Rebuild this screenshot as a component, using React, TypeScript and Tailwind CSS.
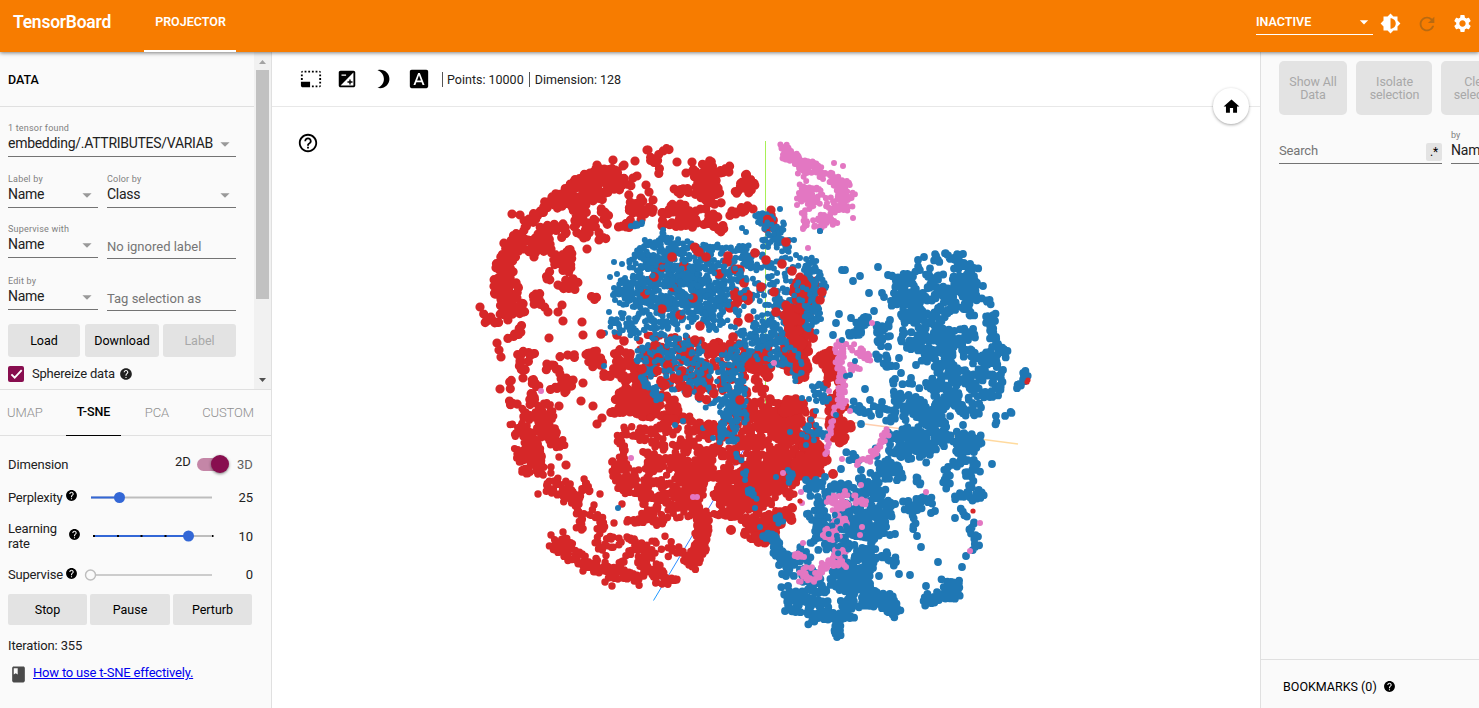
import React from "react";
import {
  MdPhotoSizeSelectSmall,
  MdExposure,
  MdBrightness3,
  MdFontDownload,
  MdHelpOutline,
  MdHelp,
  MdHome,
  MdBrightness6,
  MdRefresh,
  MdSettings,
  MdArrowDropDown,
  MdBook,
} from "react-icons/md";

type Layer = { color: string; r: number; gain: number; strokes: number[][]; dots?: number[] };

const RED = "#d62728";
const BLUE = "#1f77b4";
const PINK = "#e377c2";

// Each stroke is [x1, y1, x2, y2, halfWidth, density]; points are scattered along it.
const layers: Layer[] = [
  {
    color: RED,
    r: 4.6,
    gain: 1.35,
    strokes: [
      [648, 157, 660, 158, 4, 1.8], [662, 152, 672, 151, 3, 2], [553, 202, 605, 172, 9, 2.8], [590, 183, 620, 180, 13, 2.4],
      [520, 229, 550, 202, 4, 2.6], [498, 298, 510, 242, 10, 2.2], [508, 243, 548, 243, 10, 2.3], [546, 224, 546, 252, 7, 2.2],
      [578, 195, 588, 237, 12, 2], [598, 212, 610, 222, 7, 1.8], [553, 226, 567, 232, 8, 1.6], [563, 247, 560, 272, 11, 1.7],
      [545, 279, 552, 280, 3, 2], [560, 281, 578, 285, 7, 2.4], [590, 297, 598, 300, 2, 2], [535, 292, 537, 308, 8, 1.9],
      [502, 278, 515, 318, 13, 1.9], [482, 319, 507, 317, 5, 2], [520, 322, 519, 335, 3, 2], [507, 339, 516, 334, 2, 2],
      [613, 176, 632, 182, 6, 2], [636, 204, 650, 215, 9, 2.3], [620, 222, 632, 227, 6, 1.5], [597, 237, 608, 240, 3, 2],
      [627, 197, 630, 210, 3, 2], [657, 160, 657, 172, 3, 2], [703, 162, 706, 188, 12, 2.6], [720, 168, 732, 172, 5, 2],
      [742, 177, 753, 188, 6, 2.2], [733, 189, 750, 188, 5, 2], [674, 193, 690, 188, 5, 2], [664, 212, 690, 217, 12, 2.3],
      [695, 192, 720, 194, 11, 2.3], [682, 222, 712, 213, 9, 1.7], [714, 220, 724, 231, 6, 2.2], [733, 216, 746, 204, 5, 2],
      [519, 350, 521, 372, 5, 2.2], [524, 356, 535, 357, 5, 2], [562, 355, 578, 356, 3, 1.8], [588, 362, 602, 358, 9, 2.3],
      [613, 355, 630, 362, 8, 1.7], [545, 366, 562, 370, 4, 2], [555, 393, 572, 377, 7, 1.9], [530, 380, 540, 385, 5, 2],
      [528, 398, 534, 404, 6, 2.2], [511, 380, 511, 390, 2, 2.5], [508, 403, 515, 402, 4, 2], [614, 402, 655, 406, 12, 3],
      [600, 370, 645, 372, 10, 1.4], [625, 387, 645, 382, 9, 2], [640, 405, 680, 408, 12, 2.3], [586, 195, 600, 192, 8, 1.8],
    ],
    dots: [
      647, 150, 613, 160, 624, 165, 598, 167, 597, 165, 480, 307, 512, 214, 520, 215, 548, 312, 562, 305, 558, 312, 563, 321, 582, 322, 583, 335, 549, 338, 587, 249, 534, 257,
      497, 343, 499, 350, 501, 357, 637, 176, 646, 185, 649, 192, 653, 200, 677, 162, 692, 162, 686, 173, 648, 150, 771, 210, 753, 209, 662, 226, 500, 389, 581, 401, 593, 406, 602, 418, 597, 424, 583, 383, 559, 406, 566, 465, 523, 378, 623, 166, 635, 161,
    ],
  },
  {
    color: RED,
    r: 3.7,
    gain: 1.2,
    strokes: [
      [526, 408, 529, 462, 6, 2.1], [542, 404, 551, 440, 9, 2.8], [533, 425, 535, 472, 8, 2.1], [550, 443, 565, 444, 5, 2.5],
      [514, 424, 519, 437, 4, 2.5], [519, 447, 529, 474, 6, 2.5], [537, 452, 541, 477, 5, 1.7], [546, 480, 580, 500, 10, 2],
      [583, 480, 588, 493, 5, 2], [579, 500, 580, 530, 4, 2], [590, 508, 604, 537, 8, 0.9], [618, 460, 626, 492, 9, 2.2],
      [622, 430, 650, 434, 5, 2], [620, 435, 623, 470, 4, 2], [620, 484, 650, 485, 9, 1.6], [625, 519, 665, 523, 4, 2.2],
      [598, 550, 620, 540, 9, 1.1], [551, 546, 572, 545, 7, 2.4], [565, 552, 612, 572, 7, 3], [608, 572, 640, 580, 6, 2.3],
      [638, 545, 655, 577, 11, 2], [628, 536, 645, 547, 5, 2], [618, 562, 627, 558, 4, 1.8], [655, 578, 679, 583, 5, 2.3],
      [702, 545, 690, 568, 7, 2.5], [703, 510, 701, 550, 7, 3], [652, 540, 690, 562, 10, 0.7], [640, 510, 700, 502, 13, 1.5],
      [645, 475, 705, 475, 24, 1.4], [680, 480, 705, 490, 23, 2.4], [700, 450, 745, 450, 30, 1.6], [715, 495, 775, 500, 23, 2.8],
      [745, 530, 775, 532, 10, 2.6], [745, 440, 815, 440, 29, 2.4], [740, 480, 795, 480, 18, 2.6], [650, 432, 700, 432, 16, 1.2],
      [640, 455, 700, 455, 15, 1.1], [640, 360, 770, 370, 26, 1.1], [730, 410, 790, 415, 12, 1.6],
    ],
    dots: [538, 494, 559, 457, 551, 467, 600, 494, 594, 505, 601, 523, 614, 523, 622, 504, 645, 504, 612, 586, 605, 582, 551, 535, 563, 532, 583, 571, 634, 471],
  },
  {
    color: RED,
    r: 5,
    gain: 1.4,
    strokes: [
      [758, 540, 776, 530, 6, 2.5], [775, 520, 790, 515, 6, 2.4], [792, 467, 825, 464, 11, 3], [785, 355, 808, 372, 12, 2.6],
      [820, 353, 832, 362, 8, 2.8], [832, 365, 834, 385, 8, 2.7], [805, 278, 797, 370, 10, 2.5], [782, 410, 802, 402, 8, 2.7],
      [804, 450, 820, 442, 9, 2.6], [836, 395, 838, 442, 8, 2.8], [840, 426, 853, 425, 3, 3], [770, 230, 765, 218, 7, 1.6],
      [750, 360, 770, 372, 7, 2.2], [780, 345, 800, 345, 8, 2.2],
    ],
    dots: [731, 530, 745, 534, 833, 474, 813, 338, 792, 508, 789, 493],
  },
  {
    color: BLUE,
    r: 3,
    gain: 1,
    strokes: [
      [636, 250, 655, 250, 10, 2], [655, 245, 690, 247, 9, 1.8], [630, 268, 700, 270, 16, 1.7], [695, 255, 752, 257, 12, 1.8],
      [620, 292, 700, 292, 15, 1.8], [635, 315, 715, 310, 17, 1.5], [615, 315, 640, 335, 10, 1], [695, 285, 740, 290, 20, 1.6],
      [715, 315, 720, 330, 12, 1.1], [740, 275, 795, 285, 26, 0.9], [752, 325, 785, 330, 16, 1.6], [735, 348, 795, 350, 18, 1.1],
      [808, 260, 820, 290, 8, 2.2], [815, 290, 810, 330, 9, 1.8], [754, 217, 784, 228, 7, 1.7], [762, 240, 790, 246, 8, 1.6],
      [655, 345, 700, 350, 14, 0.8], [640, 350, 662, 368, 11, 1.5], [642, 375, 662, 397, 7, 1.6], [665, 370, 705, 380, 18, 0.9],
      [730, 350, 736, 395, 12, 1.5], [730, 390, 728, 442, 9, 2], [740, 400, 742, 428, 6, 1.3], [631, 225, 642, 225, 3, 2.5],
      [660, 228, 664, 240, 3, 1.4], [688, 382, 720, 405, 11, 0.9], [748, 488, 754, 499, 3, 3], [745, 470, 744, 480, 2, 2.6],
      [736, 455, 739, 460, 2, 2.5], [790, 470, 792, 485, 3, 2.4], [776, 515, 782, 522, 4, 2.4], [788, 345, 797, 380, 6, 1],
      [815, 385, 825, 402, 7, 1.7], [805, 425, 822, 440, 9, 1.2], [620, 300, 625, 280, 10, 1.2],
    ],
    dots: [
      614, 262, 622, 264, 610, 277, 617, 274, 614, 288, 613, 295, 615, 300, 605, 333, 609, 312, 742, 228, 746, 232, 780, 209, 794, 240, 796, 255, 800, 258, 804, 270,
      675, 425, 683, 421, 703, 428, 755, 508, 760, 527, 618, 508, 604, 366, 776, 477, 790, 432, 802, 398, 809, 399, 816, 411, 820, 231, 821, 319, 789, 247, 713, 438, 724, 365,
    ],
  },
  {
    color: RED,
    r: 4.8,
    gain: 1.25,
    strokes: [
      [690, 246, 705, 252, 4, 1.2], [735, 265, 742, 272, 4, 1.8], [803, 275, 798, 300, 6, 2], [790, 305, 800, 370, 8, 2.2],
      [676, 350, 690, 358, 7, 2], [712, 352, 718, 345, 5, 2], [732, 300, 750, 292, 8, 1.4], [766, 221, 772, 228, 3, 1.5], [752, 358, 770, 370, 7, 1.9],
      [640, 365, 720, 395, 16, 0.35],
    ],
    dots: [
      654, 277, 672, 257, 706, 257, 728, 256, 719, 274, 786, 242, 782, 264, 792, 271, 761, 287, 774, 292, 749, 318, 766, 260, 693, 298, 700, 326, 695, 340, 730, 308, 673, 287,
      755, 253, 655, 345, 740, 400, 738, 322, 770, 399, 820, 300, 822, 292, 705, 373, 665, 385, 642, 369, 617, 335, 601, 334, 624, 341, 687, 393, 708, 425, 766, 355, 776, 312,
      662, 267, 684, 266, 727, 262, 740, 270, 645, 294, 662, 309, 680, 315, 733, 337, 744, 283,
    ],
  },
  {
    color: BLUE,
    r: 2.8,
    gain: 1.2,
    strokes: [
      [640, 280, 745, 300, 30, 0.38], [755, 218, 782, 232, 7, 0.6], [790, 285, 820, 320, 10, 0.5], [640, 345, 720, 370, 18, 0.4],
      [790, 345, 800, 375, 6, 0.4], [740, 340, 780, 360, 12, 0.5], [610, 318, 622, 335, 5, 0.7],
    ],
  },
  {
    color: BLUE,
    r: 3.9,
    gain: 1.2,
    strokes: [
      [931, 257, 962, 259, 5, 2], [930, 270, 935, 285, 8, 1.5], [955, 268, 977, 275, 10, 2.4], [952, 285, 980, 290, 9, 2.4],
      [910, 272, 922, 270, 5, 2], [892, 284, 912, 278, 9, 1.7], [893, 297, 925, 303, 10, 2.2], [900, 310, 927, 320, 10, 2.3],
      [928, 292, 955, 297, 8, 1.8], [935, 315, 952, 303, 9, 1.7], [965, 298, 970, 316, 5, 2.2], [984, 299, 990, 304, 4, 2.6],
      [986, 320, 995, 316, 4, 2], [993, 318, 995, 360, 5, 2], [1000, 350, 1006, 354, 4, 2.2], [883, 322, 884, 347, 7, 2],
      [880, 353, 890, 370, 5, 2], [898, 337, 927, 345, 9, 1.5], [922, 325, 950, 352, 12, 2], [945, 335, 977, 334, 6, 2],
      [960, 342, 993, 370, 9, 1.9], [920, 355, 955, 360, 8, 1.9], [944, 365, 947, 412, 13, 2.2], [956, 382, 1002, 388, 13, 1.7],
      [962, 402, 980, 415, 9, 1.6], [890, 390, 930, 398, 11, 0.8], [895, 410, 935, 415, 11, 1.1], [851, 403, 897, 418, 6, 1.6],
      [893, 442, 950, 433, 13, 2.6], [883, 432, 900, 455, 7, 1], [870, 450, 890, 462, 5, 0.5], [956, 442, 982, 445, 11, 2.1],
      [953, 460, 978, 472, 10, 1.7], [867, 317, 851, 338, 6, 2.6], [1027, 371, 1018, 389, 3, 3.5], [1005, 416, 1013, 412, 2, 2.4],
      [994, 415, 995, 428, 2, 1.8], [905, 405, 950, 418, 9, 1.1], [900, 450, 935, 455, 9, 1.3], [945, 465, 948, 490, 4, 1.8],
      [956, 491, 985, 497, 9, 1.2], [960, 510, 970, 515, 3, 2], [972, 520, 976, 552, 4, 1.7], [905, 506, 931, 503, 7, 2.3],
      [914, 515, 914, 530, 2, 2.4], [915, 480, 922, 482, 4, 2.2], [845, 455, 860, 462, 5, 1.2],
      [878, 465, 902, 475, 10, 1.8], [805, 488, 860, 492, 8, 1.4], [862, 478, 885, 512, 13, 1.9], [813, 505, 830, 527, 11, 1.6],
      [838, 515, 887, 528, 15, 2.1], [768, 533, 788, 565, 6, 3], [786, 565, 815, 572, 10, 1.7], [795, 545, 815, 555, 6, 0.8],
      [813, 533, 845, 552, 12, 2], [848, 538, 875, 550, 9, 1.4], [865, 555, 898, 560, 7, 1.3], [785, 585, 786, 600, 5, 2],
      [790, 600, 830, 604, 12, 2.3], [800, 582, 825, 585, 10, 1.5], [832, 575, 872, 580, 14, 2.7], [842, 600, 872, 594, 12, 2.3],
      [808, 619, 852, 616, 6, 2.4], [837, 622, 837, 636, 4, 3], [870, 600, 892, 600, 9, 2.3], [886, 598, 897, 616, 6, 2.8],
      [923, 600, 961, 592, 6, 2.6], [943, 583, 960, 585, 5, 2], [840, 560, 865, 570, 11, 2.1], [900, 300, 975, 300, 26, 0.3],
    ],
    dots: [
      837, 637, 963, 254, 918, 260, 924, 257, 888, 275, 878, 267, 842, 270, 845, 270, 853, 281, 860, 276, 869, 293, 882, 293, 884, 297, 874, 311, 851, 318, 836, 323, 833, 335, 839, 314, 890, 320,
      899, 358, 916, 365, 896, 366, 901, 373, 911, 378, 895, 379, 926, 383, 865, 389, 861, 424, 963, 425, 992, 464, 917, 536, 921, 547, 938, 562, 962, 567, 899, 574, 910, 575, 955, 518, 935, 511,
      931, 513, 879, 576, 926, 586, 1001, 374, 1003, 370, 995, 321, 782, 574, 786, 576, 785, 611, 779, 565, 806, 480, 816, 480, 825, 477, 841, 469, 843, 485, 861, 470, 966, 556, 890, 535, 895, 534, 877, 325, 870, 400, 882, 402,
    ],
  },
  {
    color: PINK,
    r: 3,
    gain: 1.25,
    strokes: [
      [783, 144, 787, 160, 4, 2.8], [786, 152, 800, 162, 5, 2.8], [798, 163, 820, 170, 6, 2.8], [818, 170, 846, 188, 6, 2],
      [800, 170, 808, 180, 4, 1], [799, 192, 822, 196, 8, 2.1], [805, 205, 812, 200, 6, 2], [826, 208, 842, 200, 9, 1.5],
      [840, 184, 850, 200, 8, 1.8], [803, 210, 805, 231, 3, 2.2], [813, 222, 835, 220, 7, 1.5], [842, 203, 848, 208, 5, 2.2],
      [838, 342, 846, 350, 5, 2.2], [840, 350, 840, 372, 5, 2], [854, 348, 870, 359, 4, 2.5], [850, 365, 858, 370, 4, 1.9],
      [841, 372, 842, 400, 4, 2.3], [838, 400, 846, 406, 5, 1.7], [834, 408, 826, 455, 1.5, 2.4], [889, 430, 867, 462, 3, 3],
      [862, 458, 858, 465, 2, 2], [826, 500, 850, 500, 6, 1.3], [853, 500, 865, 503, 5, 1.7], [842, 502, 836, 512, 5, 2],
      [826, 530, 836, 540, 7, 1.8], [842, 550, 832, 566, 6, 2], [822, 566, 828, 570, 4, 2], [799, 577, 822, 577, 5, 2],
      [795, 553, 803, 560, 4, 1.4], [835, 525, 848, 522, 6, 1], [805, 570, 812, 567, 3, 1.4],
    ],
    dots: [
      834, 163, 843, 166, 808, 248, 853, 218, 797, 205, 799, 193, 872, 323, 926, 492, 980, 523, 970, 551, 801, 492, 802, 503, 541, 391, 631, 458, 783, 473, 861, 485, 845, 491, 862, 527, 857, 465, 842, 459, 693, 497, 697, 497, 803, 543, 844, 565, 846, 567,
      850, 411, 829, 391, 774, 363, 860, 535,
    ],
  },
  { color: BLUE, r: 3, gain: 1.2, strokes: [[824, 505, 850, 550, 12, 0.3]], dots: [820, 231, 855, 361, 842, 340, 846, 376, 850, 375, 836, 415, 806, 445] },
  { color: RED, r: 2.6, gain: 1, strokes: [], dots: [1028, 380, 1027, 382, 973, 511, 800, 501] },
];

function makeRandom(seed: number) {
  let s = seed;
  return () => {
    s = (s * 1664525 + 1013904223) >>> 0;
    return s / 4294967296;
  };
}

function layerPath(layer: Layer, index: number) {
  const rnd = makeRandom(977 + index * 131);
  let d = "";
  for (const [x1, y1, x2, y2, w, density] of layer.strokes) {
    const len = Math.hypot(x2 - x1, y2 - y1) || 1;
    const nx = -(y2 - y1) / len;
    const ny = (x2 - x1) / len;
    const n = Math.max(3, Math.round((layer.gain * density * (len + 4) * 2 * w) / (Math.PI * layer.r * layer.r)));
    for (let i = 0; i < n; i++) {
      const t = (i + rnd()) / n;
      const o = (rnd() * 2 - 1) * w;
      const end = (rnd() - 0.5) * 5;
      const x = x1 + (x2 - x1) * t + nx * o + ny * end;
      const y = y1 + (y2 - y1) * t + ny * o - nx * end;
      d += `M${x.toFixed(1)} ${y.toFixed(1)}h.01`;
    }
  }
  const dots = layer.dots ?? [];
  for (let i = 0; i < dots.length; i += 2) d += `M${dots[i]} ${dots[i + 1]}h.01`;
  return d;
}

function Scatter() {
  return (
    <svg className="block h-full w-full" viewBox="272 107 988 601" fill="none">
      <defs>
        <linearGradient id="axisX" gradientUnits="userSpaceOnUse" x1="765" y1="411" x2="1018" y2="444">
          <stop offset="0" stopColor="#ffc4bc" />
          <stop offset="1" stopColor="#ffdb9c" />
        </linearGradient>
        <linearGradient id="axisZ" gradientUnits="userSpaceOnUse" x1="654" y1="600" x2="765" y2="414">
          <stop offset="0" stopColor="#1e9bff" />
          <stop offset="1" stopColor="#6a50ff" />
        </linearGradient>
      </defs>
      <path d="M765.5 141V411" stroke="#a8f056" />
      <path d="M765 411L1018 444" stroke="url(#axisX)" strokeWidth="1.6" />
      <path d="M653.5 600.5L765 414" stroke="url(#axisZ)" />
      {layers.map((layer, i) => (
        <path key={i} d={layerPath(layer, i)} stroke={layer.color} strokeWidth={layer.r * 2} strokeLinecap="round" />
      ))}
    </svg>
  );
}

function Field({ label, value, className }: { label: string; value: string; className: string }) {
  return (
    <div className={`flex flex-col justify-end border-b border-[#737373] ${className}`}>
      <span className="text-[9px] leading-[11px] tracking-[0.2px] text-[#808080]">{label}</span>
      <div className="flex h-[22px] items-center justify-between">
        <span className="mb-[5px] whitespace-nowrap text-[14px] leading-5 tracking-[-0.28px] text-[#212121]">{value}</span>
        <MdArrowDropDown className="mb-[2px] size-[22px] shrink-0 text-[#999]" />
      </div>
    </div>
  );
}

function TextField({ placeholder }: { placeholder: string }) {
  return (
    <div className="-mb-px flex h-[25px] w-[129px] items-start border-b border-[#737373] text-[13px] leading-[25px] text-[#757575]">
      {placeholder}
    </div>
  );
}

function Button({ label, className }: { label: string; className: string }) {
  return <div className={`flex items-center justify-center bg-[#e3e3e3] pt-px text-[12.5px] ${className}`}>{label}</div>;
}

function DataPanel() {
  return (
    <div className="flex h-[338px] border-b border-[#e0e0e0]">
      <div className="flex w-[254px] flex-col">
        <div className="flex h-[55px] items-center border-b border-[#e0e0e0] pl-2 pt-[2px] text-[12.5px] font-medium text-black">DATA</div>
        <div className="flex flex-col px-2">
          <Field label="1 tensor found" value="embedding/.ATTRIBUTES/VARIAB" className="h-[50px] w-[228px]" />
          <div className="flex h-[51px] items-end gap-[9px]">
            <Field label="Label by" value="Name" className="w-[90px]" />
            <Field label="Color by" value="Class" className="w-[129px]" />
          </div>
          <div className="flex h-[50px] items-end gap-[9px]">
            <Field label="Supervise with" value="Name" className="w-[90px]" />
            <TextField placeholder="No ignored label" />
          </div>
          <div className="flex h-[52px] items-end gap-[9px]">
            <Field label="Edit by" value="Name" className="w-[90px]" />
            <TextField placeholder="Tag selection as" />
          </div>
          <div className="mt-[14px] flex h-[33px] text-black">
            <Button label="Load" className="mr-[5px] w-[72px] rounded-[3px]" />
            <Button label="Download" className="mr-1 w-[74px] rounded-[3px]" />
            <Button label="Label" className="w-[73px] rounded-[3px] text-[#a8a8a8]" />
          </div>
          <div className="mt-[9px] flex h-4 items-center text-[13px] text-[#212121]">
            <div className="mr-[8px] flex size-4 items-center justify-center rounded-[2px] bg-[#880e4f]">
              <svg viewBox="0 0 16 16" className="size-4" fill="none" stroke="white" strokeWidth="1.9">
                <path d="M3.4 8.3l3.3 3.3 7-7.4" />
              </svg>
            </div>
            <span className="w-[87px] whitespace-nowrap tracking-[-0.2px]">Sphereize data</span>
            <MdHelp className="mb-px size-[14px]" />
          </div>
        </div>
      </div>
      <div className="flex w-[17px] flex-col items-center bg-[#f1f1f1]">
        <svg viewBox="0 0 17 18" className="h-[18px] w-[17px]">
          <path d="M5 12h7L8.500 8z" fill="#a3a3a3" />
        </svg>
        <div className="h-[229px] w-[13px] bg-[#c1c1c1]" />
        <svg viewBox="0 0 17 18" className="mt-auto h-[18px] w-[17px]">
          <path d="M5 7h7L8.500 11z" fill="#505050" />
        </svg>
      </div>
    </div>
  );
}

function ProjectionPanel() {
  return (
    <div className="flex flex-col text-[13px] text-[#212121]">
      <div className="flex h-[46px] border-b border-[#e0e0e0] text-[13px] font-light leading-[45px] tracking-[-0.1px] text-[#8f8f8f]">
        <span className="w-[66px] pl-[7px]">UMAP</span>
        <span className="h-[46px] w-[55px] border-b border-black text-center text-[12.5px] font-medium leading-[43px] text-black">T-SNE</span>
        <span className="w-[72px] text-center">PCA</span>
        <span className="w-[70px] text-center">CUSTOM</span>
      </div>
      <div className="flex h-[30px] items-end pl-2">
        <span className="mb-[-8px] w-[167px] tracking-[-0.15px]">Dimension</span>
        <span className="mb-[-5px] w-[22px]">2D</span>
        <div className="mb-[-7px] flex h-[18px] w-[33px] items-center">
          <div className="flex h-[13px] w-[30px] items-center justify-end rounded-full bg-[#c486a7]">
            <div className="-mr-[2px] size-[18px] shrink-0 rounded-full bg-[#880e4f] shadow-[0_1px_3px_rgba(0,0,0,0.5)]" />
          </div>
        </div>
        <span className="mb-[-8px] ml-[7px] text-[#606060]">3D</span>
      </div>
      <div className="mt-[21px] flex h-5 items-center pl-2">
        <span className="w-[57px] whitespace-nowrap pt-px tracking-[-0.25px]">Perplexity</span>
        <MdHelp className="mb-[3px] mr-[12px] size-[13px] text-black" />
        <svg viewBox="0 0 125 14" className="h-[14px] w-[125px]">
          <path d="M1 7.500H122" stroke="#bdbdbd" strokeWidth="2" />
          <path d="M1 7.500H29" stroke="#3367d6" strokeWidth="2" />
          <circle cx="29.500" cy="7.500" r="5.500" fill="#3367d6" />
        </svg>
        <span className="ml-auto mr-[18px] pt-px">25</span>
      </div>
      <div className="mt-[12px] flex h-[34px] items-center pl-2 leading-[15px]">
        <span className="w-[60px] tracking-[-0.15px]">
          Learning
          <br />
          rate
        </span>
        <MdHelp className="mb-[4px] mr-[12px] size-[13px] text-black" />
        <svg viewBox="0 0 125 14" className="h-[14px] w-[125px]">
          <path d="M1 7H120" stroke="#bdbdbd" strokeWidth="2" />
          <path d="M1 7H95" stroke="#3367d6" strokeWidth="2" />
          <path d="M0 7h2M24 7h2M47.500 7h2M71.500 7h2M119 7h1.500" stroke="#000" strokeWidth="2" />
          <circle cx="95.500" cy="7" r="5.500" fill="#3367d6" />
        </svg>
        <span className="ml-auto mr-[18px]">10</span>
      </div>
      <div className="mt-[12px] flex h-5 items-center pl-2">
        <span className="w-[57px] whitespace-nowrap tracking-[-0.2px]">Supervise</span>
        <MdHelp className="mb-1 mr-[6px] size-[13px] text-black" />
        <svg viewBox="0 0 130 14" className="h-[14px] w-[130px]">
          <path d="M11 7H128" stroke="#bdbdbd" strokeWidth="1.400" />
          <circle cx="6.500" cy="7" r="5" fill="#fafafa" stroke="#bdbdbd" strokeWidth="1.400" />
        </svg>
        <span className="ml-auto mr-[18px]">0</span>
      </div>
      <div className="mt-[9px] flex h-[31px] gap-[3px] pl-2 text-black">
        <Button label="Stop" className="w-[79px] rounded-[2px]" />
        <Button label="Pause" className="w-[80px] rounded-[2px]" />
        <Button label="Perturb" className="w-[79px] rounded-[2px]" />
      </div>
      <div className="mt-[11px] pl-2 leading-5 tracking-[-0.15px]">Iteration: 355</div>
      <div className="mt-[7px] flex h-5 items-center pl-[9px]">
        <MdBook className="mt-[2px] size-[19px] text-[#4a4a4a]" />
        <a className="ml-[5px] tracking-[-0.2px] text-[#0000ee] underline">How to use t-SNE effectively.</a>
      </div>
    </div>
  );
}

function RightPanel() {
  return (
    <div className="flex w-[219px] shrink-0 flex-col overflow-hidden border-l border-[#e0e0e0] bg-[#fafafa]">
      <div className="ml-[18px] mt-[9px] flex h-[54px] w-[300px] text-center text-[12.5px] leading-[13px] tracking-[-0.1px] text-[#a8a8a8]">
        <div className="mr-[9px] flex w-[68px] items-center justify-center rounded-[5px] bg-[#e3e3e3]">Show All<br />Data</div>
        <div className="mr-[9px] flex w-[76px] items-center justify-center rounded-[5px] bg-[#e3e3e3] pl-px">Isolate<br />selection</div>
        <div className="flex w-[75px] items-center justify-center rounded-[5px] bg-[#e3e3e3]">Clear<br />selection</div>
      </div>
      <div className="ml-[18px] flex h-[49px] w-[300px] items-end">
        <div className="mr-[9px] flex h-[23px] w-[163px] justify-between border-b border-[#737373] text-[13px] leading-5 tracking-[-0.15px] text-[#757575]">
          Search
          <span className="mt-[2px] flex h-[18px] w-4 items-center justify-center rounded-[2px] bg-[#e3e3e3] text-[12px] text-black">.*</span>
        </div>
        <div className="flex w-[70px] flex-col border-b border-[#737373]">
          <span className="text-[9px] leading-[11px] text-[#808080]">by</span>
          <span className="h-[22px] text-[14px] leading-[19px] tracking-[-0.2px] text-[#212121]">Name</span>
        </div>
      </div>
      <div className="mt-auto flex h-[49px] items-center border-t border-[#e0e0e0] pl-[22px] pt-[6px] text-[12.5px] text-black">
        BOOKMARKS (0)
        <MdHelp className="mb-px ml-[6px] size-[13px]" />
      </div>
    </div>
  );
}

export default function App() {
  return (
    <div className="flex h-[708px] w-[1479px] flex-col overflow-hidden bg-white font-['Roboto',sans-serif]">
      <header className="relative z-10 flex h-[52px] shrink-0 bg-[#f77c00] text-white shadow-[0_1px_4px_rgba(0,0,0,0.5)]">
        <div className="w-[144px] pl-[13px] pt-px text-[17.5px] font-semibold leading-[43px] tracking-[-0.25px]">TensorBoard</div>
        <div className="w-[92px] border-b-2 border-white pl-px text-center text-[12.5px] font-semibold leading-[43px]">PROJECTOR</div>
        <div className="ml-auto mr-[7px] flex h-[35px] w-[117px] items-center justify-between border-b border-white pt-[10px] text-[12.5px] font-semibold">
          INACTIVE
          <MdArrowDropDown className="-mr-px size-[20px]" />
        </div>
        <div className="flex h-[47px] items-center">
          <MdBrightness6 className="size-[21px]" />
          <MdRefresh className="ml-[15px] size-[22px] text-[#b96a10]" />
          <MdSettings className="ml-[14px] mr-[6px] size-[21px]" />
        </div>
      </header>
      <div className="flex min-h-0 flex-1">
        <aside className="w-[272px] shrink-0 border-r border-[#e0e0e0] bg-[#fafafa]">
          <DataPanel />
          <ProjectionPanel />
        </aside>
        <main className="relative flex w-[988px] flex-col">
          <div className="flex h-[55px] shrink-0 items-center border-b border-[#e8e8e8] pl-[28px] text-black">
            <MdPhotoSizeSelectSmall className="mr-[14px] size-[22px]" />
            <MdExposure className="mr-[14px] size-[22px]" />
            <MdBrightness3 className="mr-[14px] size-[22px]" />
            <MdFontDownload className="mr-[12px] size-[22px]" />
            <span className="border-l border-[#555] pl-1 text-[12.5px] leading-[15px] text-[#212121]">Points: 10000</span>
            <span className="ml-[5px] border-l border-[#555] pl-[5px] text-[12.5px] leading-[15px] text-[#212121]">Dimension: 128</span>
          </div>
          <div className="min-h-0 flex-1">
            <Scatter />
          </div>
          <MdHelpOutline className="absolute left-[25px] top-[80px] size-[22px] text-black" />
          <div className="absolute right-[11px] top-[36px] flex size-9 items-center justify-center rounded-full bg-white shadow-[0_1px_3px_rgba(0,0,0,0.35)]">
            <MdHome className="size-[19px] text-black" />
          </div>
        </main>
        <RightPanel />
      </div>
    </div>
  );
}
